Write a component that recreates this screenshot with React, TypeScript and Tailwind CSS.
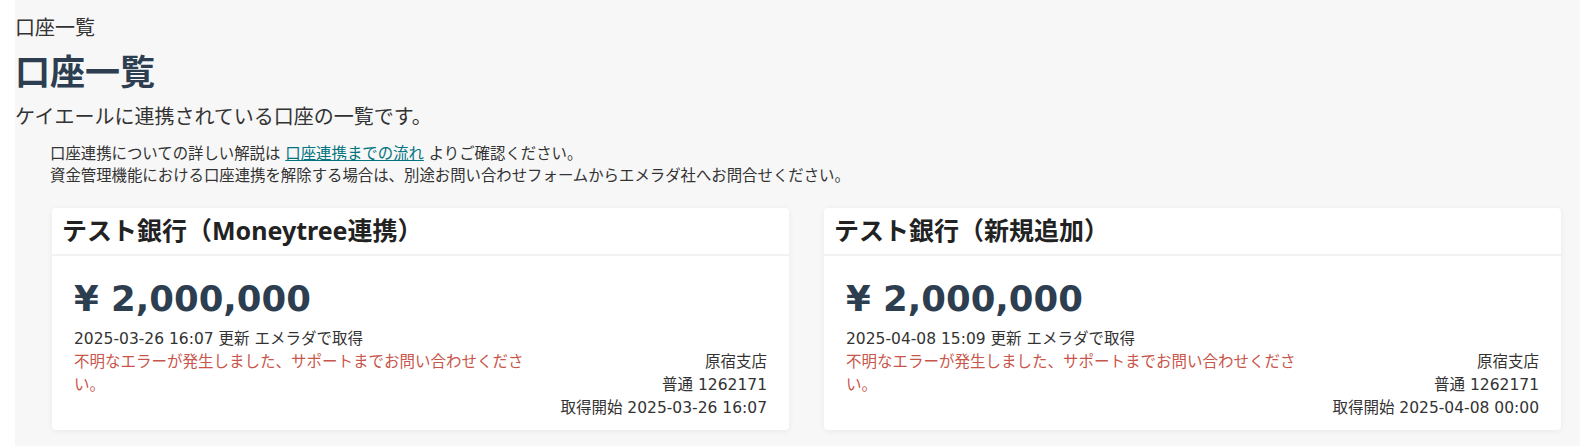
import React from "react";

type Account = {
  title: string;
  amount: string;
  updatedAt: string;
  branch: string;
  number: string;
  startedAt: string;
};

const accounts: Account[] = [
  {
    title: "テスト銀行（Moneytree連携）",
    amount: "¥ 2,000,000",
    updatedAt: "2025-03-26 16:07",
    branch: "原宿支店",
    number: "普通 1262171",
    startedAt: "取得開始 2025-03-26 16:07",
  },
  {
    title: "テスト銀行（新規追加）",
    amount: "¥ 2,000,000",
    updatedAt: "2025-04-08 15:09",
    branch: "原宿支店",
    number: "普通 1262171",
    startedAt: "取得開始 2025-04-08 00:00",
  },
];

const bodyFont = "font-['DejaVu_Sans','Noto_Sans_CJK_JP',sans-serif]";

function AccountCard({ account }: { account: Account }) {
  return (
    <div className="rounded-[4px] bg-white shadow-[0_1px_6px_rgba(0,0,0,0.06)]">
      <div className="border-b-2 border-[#f2f2f2] px-[10px] pt-[6px] pb-[8px]">
        <h2 className="font-['Noto_Sans','Noto_Sans_CJK_JP',sans-serif] text-[25px] leading-[32px] font-bold text-[#222]">
          {account.title}
        </h2>
      </div>
      <div className="px-[22px] pt-[22px] pb-[10px]">
        <div className="text-[35.5px] leading-[42px] font-bold text-[#2c3e50]">
          {account.amount}
        </div>
        <div className="mt-[8px] text-[15.5px] leading-[23px] text-[#333]">
          {account.updatedAt} 更新 エメラダで取得
        </div>
        <div className="grid grid-cols-[453px_1fr] text-[15.5px] leading-[23px]">
          <div className="text-[#c8554a]">
            不明なエラーが発生しました、サポートまでお問い合わせください。
          </div>
          <div className="text-right text-[#333]">
            <div>{account.branch}</div>
            <div>{account.number}</div>
            <div>{account.startedAt}</div>
          </div>
        </div>
      </div>
    </div>
  );
}

export default function App() {
  return (
    <div className={`min-h-screen bg-white pl-[15px] ${bodyFont}`}>
      <div className="min-h-[446px] bg-[#f7f7f7] pt-[16px] pb-[20px]">
        <div className="text-[20px] leading-[24px] text-[#333]">口座一覧</div>
        <h1 className="mt-[13px] text-[35px] leading-[40px] font-bold text-[#2c3e50]">
          口座一覧
        </h1>
        <p className="mt-[12px] text-[20px] leading-[24px] text-[#333]">
          ケイエールに連携されている口座の一覧です。
        </p>
        <div className="mt-[14px] ml-[35px] text-[15.4px] leading-[22px] text-[#333]">
          <p>
            口座連携についての詳しい解説は{" "}
            <a href="#" className="text-[#00747f] underline">
              口座連携までの流れ
            </a>{" "}
            よりご確認ください。
          </p>
          <p>
            資金管理機能における口座連携を解除する場合は、別途お問い合わせフォームからエメラダ社へお問合せください。
          </p>
        </div>
        <div className="mt-[21px] ml-[37px] mr-[19px] grid grid-cols-2 gap-[35px]">
          {accounts.map((a) => (
            <AccountCard key={a.title} account={a} />
          ))}
        </div>
      </div>
    </div>
  );
}
